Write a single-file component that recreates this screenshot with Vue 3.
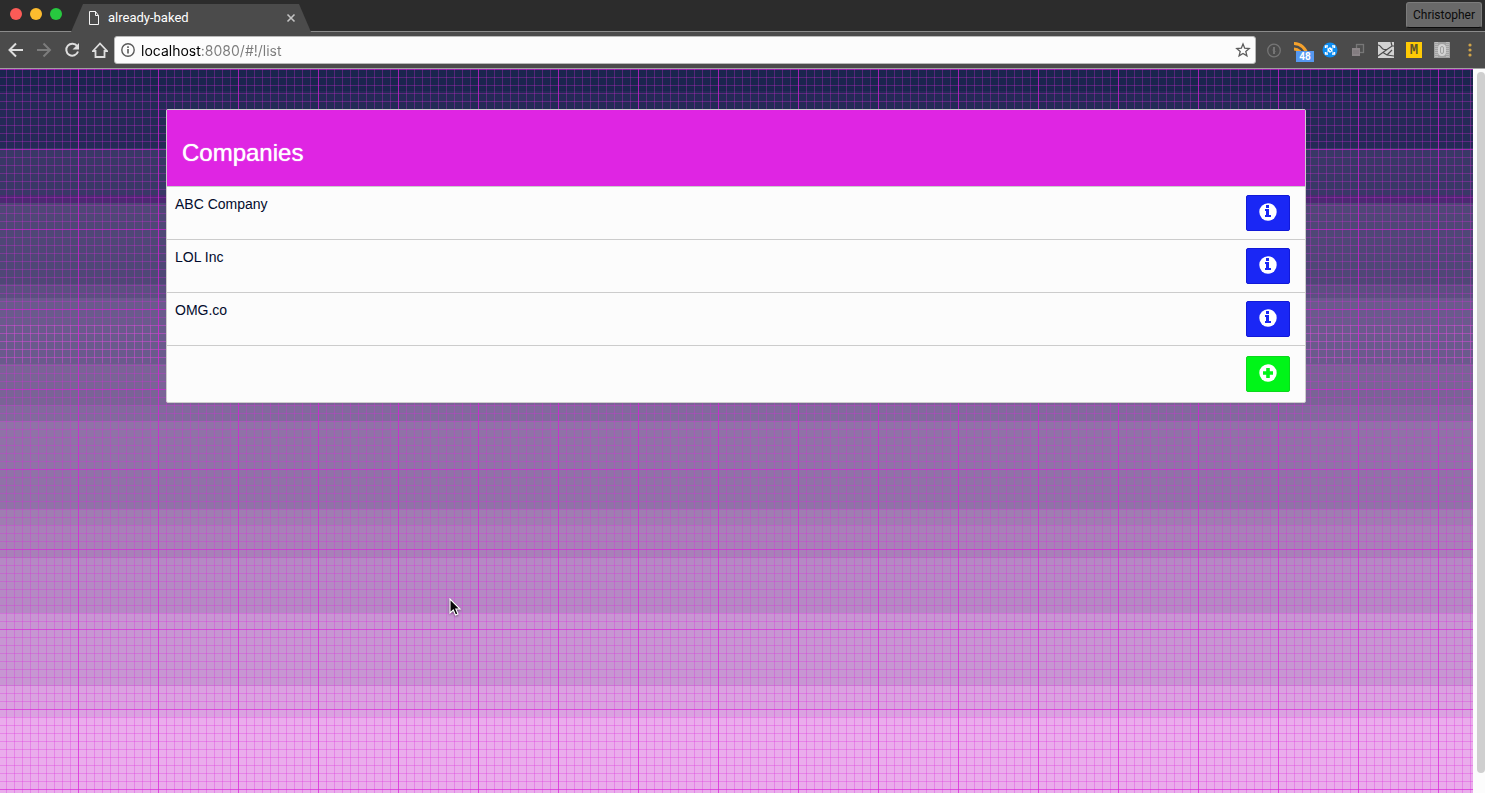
<script setup>
import { ref } from 'vue'

const url = ref('localhost:8080/#!/list')
const companies = ['ABC Company', 'LOL Inc', 'OMG.co']
</script>

<template>
  <div class="browser">
    <header class="tabbar">
      <div class="lights">
        <button class="light red" aria-label="Close window"></button>
        <button class="light amber" aria-label="Minimize window"></button>
        <button class="light green" aria-label="Zoom window"></button>
      </div>
      <div class="tab">
        <svg class="doc" width="12" height="16" viewBox="0 0 12 16" fill="none" stroke="#f4f4f4">
          <path d="M1.5 1.5h6l3 4v9h-9z M7.5 1.5v4h3" />
        </svg>
        <span class="tab-title">already-baked</span>
        <button class="plain" aria-label="Close tab">
          <svg width="10" height="10" viewBox="0 0 10 10" stroke="#c4c4c4" stroke-width="1.6">
            <path d="M1.500 1.500l7 7M8.500 1.500l-7 7" />
          </svg>
        </button>
      </div>
      <button class="profile">Christopher</button>
    </header>

    <nav class="toolbar">
      <div class="nav">
        <button class="plain tool" aria-label="Back">
          <svg width="16" height="16" viewBox="0 0 16 16" fill="none" stroke="#dedede" stroke-width="2">
            <path d="M15 8H2M8 1.5L1.5 8L8 14.5" />
          </svg>
        </button>
        <button class="plain tool" aria-label="Forward">
          <svg width="16" height="16" viewBox="0 0 16 16" fill="none" stroke="#7c7c7c" stroke-width="2">
            <path d="M1 8h12M7.500 1.500L14 8L7.500 14.500" />
          </svg>
        </button>
        <button class="plain tool" aria-label="Reload">
          <svg width="16" height="16" viewBox="0 0 16 16" fill="none" stroke="#dedede" stroke-width="2">
            <path d="M13.2 4.2A6 6 0 1 0 14 9.5" />
            <path d="M15 1v6.500H8.500z" fill="#dedede" stroke="none" />
          </svg>
        </button>
        <button class="plain tool" aria-label="Home">
          <svg width="16" height="16" viewBox="0 0 16 16" fill="none" stroke="#dedede" stroke-width="1.8">
            <path d="M1 9L8 1.500L15 9H12.500V15H3.500V9z" />
          </svg>
        </button>
      </div>
      <div class="omnibox">
        <svg width="14" height="14" viewBox="0 0 14 14" fill="none" stroke="#5a5a5a">
          <circle cx="7" cy="7" r="6.200" stroke-width="1.400" />
          <path d="M7 6v4.500M7 3.300v1.700" stroke-width="1.600" />
        </svg>
        <input v-model="url" class="url" type="text" aria-label="Address" spellcheck="false" />
        <button class="plain" aria-label="Bookmark this page">
          <svg width="16" height="16" viewBox="0 0 16 16" fill="none" stroke="#5c5c5c" stroke-width="1.300">
            <path d="M8 2l1.700 4.200 4.500.3-3.400 2.900 1.100 4.500L8 11.500l-3.900 2.400 1.100-4.500L1.800 6.500l4.500-.3z" />
          </svg>
        </button>
      </div>
      <div class="extensions">
        <button class="plain tool" aria-label="Password manager">
          <svg width="16" height="16" viewBox="0 0 16 16" fill="none" stroke="#757575">
            <circle cx="8" cy="8.500" r="6.300" stroke-width="1.300" />
            <path d="M8 5v7" stroke-width="2" />
            <path d="M6.500 8h1M8.500 9.500h1" />
          </svg>
        </button>
        <button class="plain tool feed" aria-label="Feed reader">
          <svg width="16" height="16" viewBox="0 0 16 16" fill="none" stroke="#f5a12c" stroke-width="3">
            <path d="M0 1.500A13 13 0 0 1 13 13M0 7a8 8 0 0 1 8 8" />
          </svg>
          <span class="count">48</span>
        </button>
        <button class="plain tool" aria-label="Network tools">
          <svg width="16" height="16" viewBox="0 0 16 16">
            <circle cx="8" cy="8" r="7.500" fill="#0d8df2" />
            <path d="M8 5l3 3-3 3-3-3z" fill="#fff" />
            <path d="M3.500 6V4H6M10 4h2.500v2M12.500 10v2H10M6 12H3.500v-2" fill="none" stroke="#fff" stroke-width="1.400" />
            <path d="M4.500 5l2 2M11.500 5l-2 2M11.500 11l-2-2M4.500 11l2-2" stroke="#fff" />
            <path d="M7 7.500l2 1.500" stroke="#0d8df2" />
          </svg>
        </button>
        <button class="plain tool" aria-label="Window manager">
          <svg width="16" height="16" viewBox="0 0 16 16">
            <rect x="6.500" y="2.500" width="7" height="8" fill="#505050" stroke="#777" stroke-width="1.300" />
            <rect x="2" y="6" width="8" height="8" fill="#8b8588" />
            <path d="M3.500 9h5M3.500 11h5" stroke="#6c6668" stroke-dasharray="1 1" />
          </svg>
        </button>
        <button class="plain tool" aria-label="Map tools">
          <svg width="16" height="16" viewBox="0 0 16 16" fill="none" stroke="#4b4b4b" stroke-width="1.200">
            <rect width="16" height="16" fill="#d2d2d2" stroke="none" />
            <path d="M0 3c3 0 3 4 6 4.500h3l5-3.500h2M13 0l1 4M0 14l9-6.500M5 10.500l4 2.500 7 1M9 13l5-5" />
          </svg>
        </button>
        <button class="plain tool" aria-label="M extension">
          <span class="m-badge">M</span>
        </button>
        <button class="plain tool" aria-label="Counter">
          <svg width="16" height="16" viewBox="0 0 16 16" fill="none">
            <rect width="16" height="16" fill="#a2a2a2" />
            <path d="M2.500 0v16M13.500 0v16" stroke="#bcbcbc" stroke-dasharray="1 1" stroke-width="3" />
            <rect x="4" y="2" width="8" height="12" rx="4" fill="#d3d3d3" />
            <rect x="6.500" y="4.500" width="3" height="7" rx="1.500" stroke="#a0a0a0" />
          </svg>
        </button>
        <button class="plain tool" aria-label="Menu">
          <svg width="16" height="16" viewBox="0 0 16 16" fill="#d1a449">
            <circle cx="8" cy="3" r="1.600" /><circle cx="8" cy="8" r="1.600" /><circle cx="8" cy="13" r="1.600" />
          </svg>
        </button>
      </div>
    </nav>

    <div class="viewport">
      <main class="page">
        <section class="card">
          <h1 class="heading">Companies</h1>
          <table class="companies" aria-label="Companies">
            <tbody>
              <tr v-for="name in companies" :key="name">
                <td>{{ name }}</td>
                <td class="action">
                  <button class="btn info" :aria-label="'Details of ' + name">
                    <svg width="18" height="18" viewBox="0 0 18 18">
                      <circle cx="9" cy="9" r="8.700" fill="#fff" />
                      <path d="M7 2h3v3H7zM6 6h4v6h2v2H6v-2h1V8H6z" fill="#1a27f5" />
                    </svg>
                  </button>
                </td>
              </tr>
              <tr class="last">
                <td></td>
                <td class="action">
                  <button class="btn add" aria-label="Add company">
                    <svg width="18" height="18" viewBox="0 0 18 18">
                      <circle cx="9" cy="9" r="8.700" fill="#fff" />
                      <path d="M7.200 4h3.600v3.200H14v3.600h-3.200V14H7.200v-3.200H4V7.200h3.200z" fill="#00f518" />
                    </svg>
                  </button>
                </td>
              </tr>
            </tbody>
          </table>
        </section>
      </main>
      <div class="scrollbar"><div class="thumb"></div></div>
    </div>

    <svg class="pointer" width="14" height="20" viewBox="0 0 14 20">
      <path d="M1 1v14l3.300-3 2.200 5 2.500-1-2.200-5H11z" fill="#080808" stroke="#fff" stroke-width="1.100" />
    </svg>
  </div>
</template>

<style>
body {
  margin: 0;
}
</style>

<style scoped>
* {
  box-sizing: border-box;
}
.browser {
  position: relative;
  display: flex;
  flex-direction: column;
  height: 100vh;
  overflow: hidden;
  font-family: "Liberation Sans", Arial, sans-serif;
}
button {
  font: inherit;
}
svg {
  display: block;
  flex: none;
}
.plain {
  display: flex;
  align-items: center;
  justify-content: center;
  padding: 0;
  border: 0;
  background: none;
}
.tabbar {
  display: flex;
  flex: none;
  height: 32px;
  background: #2c2c2c;
  border-bottom: 1px solid #8b8b8b;
  font-family: Roboto, sans-serif;
}
.lights {
  display: flex;
  gap: 8px;
  padding: 8px 9px 0 10px;
}
.light {
  width: 12px;
  height: 12px;
  padding: 0;
  border: 0;
  border-radius: 50%;
}
.red { background: #fc5b57; }
.amber { background: #fdbc2e; }
.green { background: #27c93f; }
.tab {
  display: flex;
  align-items: center;
  width: 240px;
  height: 28px;
  margin-top: 4px;
  padding: 0 15px 0 17px;
  background: #4b4b4b;
  clip-path: polygon(0 100%, 12px 0, 228px 0, 100% 100%);
}
.tab-title {
  flex: 1;
  margin-left: 8px;
  color: #fff;
  font-size: 13px;
  line-height: 16px;
}
.profile {
  height: 26px;
  margin: 2px 3px 0 auto;
  padding: 0 6px;
  background: #696969;
  border: 1px solid #7c7c7c;
  border-bottom-color: #0c0c0c;
  border-radius: 3px;
  color: #0b0b0b;
  font-size: 12px;
}
.toolbar {
  display: flex;
  flex: none;
  align-items: center;
  height: 37px;
  padding: 0 7px 0 8px;
  background: #4b4b4b;
  border-bottom: 1px solid #a0a0a0;
}
.nav,
.extensions {
  display: flex;
  gap: 12px;
}
.tool {
  width: 16px;
  height: 16px;
}
.omnibox {
  display: flex;
  flex: 1;
  align-items: center;
  height: 28px;
  margin: 0 10px 0 6px;
  padding: 0 4px 0 6px;
  background: #fcfcfc;
  border: 1px solid #b8b8b8;
  border-radius: 3px;
}
.url {
  flex: 1;
  min-width: 0;
  height: 24px;
  margin-left: 6px;
  padding: 0;
  border: 0;
  outline: 0;
  background: linear-gradient(90deg, #000 60px, #7b7b7b 60px);
  background-clip: text;
  -webkit-background-clip: text;
  color: transparent;
  font-family: Inter, sans-serif;
  font-size: 14px;
}
.feed {
  position: relative;
}
.count {
  position: absolute;
  left: 2px;
  top: 9px;
  width: 18px;
  background: #5698f0;
  color: #fff;
  font: bold 10px/11px Roboto, sans-serif;
  text-align: center;
}
.m-badge {
  width: 16px;
  background: #ffca05;
  color: #5d542c;
  font: bold 14px/16px "Liberation Mono", monospace;
}
.viewport {
  display: flex;
  flex: 1;
  min-height: 0;
}
.page {
  flex: 1;
  padding: 40px 16px 0 15px;
  background:
    repeating-linear-gradient(90deg, transparent 0 78px, #d81ed899 78px 79px, transparent 79px 80px),
    repeating-linear-gradient(180deg, #d81ed880 0 1px, transparent 1px 80px),
    repeating-linear-gradient(90deg, transparent 0 6px, #d060d055 6px 7px, transparent 7px 8px) 0 256px / 100% 38px no-repeat,
    repeating-linear-gradient(180deg, #d060d055 0 1px, transparent 1px 8px) 0 256px / 100% 38px no-repeat,
    repeating-linear-gradient(90deg, transparent 0 6px, #dc28dc4d 6px 7px, transparent 7px 8px),
    repeating-linear-gradient(180deg, #dc28dc4d 0 1px, transparent 1px 8px),
    linear-gradient(
      180deg,
      #1a254e 0 22px, #242a56 22px 79px,
      #393866 79px 126px, #4c2972 126px 134px,
      #4f4776 134px 215px, #5b4f80 215px 229px,
      #6a5a8c 229px 295px, #7a6396 295px 336px,
      #82699d 336px 352px, #9072a7 352px 440px,
      #9f7db1 440px 456px, #a880b8 456px 489px,
      #b589c4 489px 544px, #c796d2 544px 617px,
      #daa2e0 617px 648px, #eaacec 648px
    );
}
.card {
  max-width: 1140px;
  margin: 0 auto;
  background: #fcfcfc;
  border: 1px solid #ccc;
  border-radius: 2px;
}
.heading {
  margin: 0;
  padding: 28px 15px 18px;
  background: #df25e3;
  color: #fff;
  font-size: 24px;
  font-weight: 400;
  line-height: 30px;
  text-shadow: 0 0 1px #fff;
}
.companies {
  width: 100%;
  border-collapse: separate;
  border-spacing: 0;
  color: #020b2c;
  font-size: 14px;
  line-height: 18px;
}
.companies td {
  height: 53px;
  padding: 8px;
  border-top: 1px solid #ccc;
  vertical-align: top;
}
.companies .action {
  width: 67px;
  padding-right: 15px;
}
.companies .last td {
  height: 57px;
  padding-top: 10px;
  padding-bottom: 10px;
}
.btn {
  display: flex;
  align-items: center;
  justify-content: center;
  width: 44px;
  height: 36px;
  padding: 0 0 2px;
  border: 1px solid;
  border-radius: 2px;
}
.info {
  background: #1a27f5;
  border-color: #1219d8;
}
.add {
  background: #00f518;
  border-color: #0cd81c;
}
.scrollbar {
  flex: none;
  width: 12px;
  padding: 3px 0 20px 4px;
  background: #fcfcfc;
}
.thumb {
  height: 100%;
  background: #cfcfcf;
  border-radius: 4px;
}
.pointer {
  position: absolute;
  left: 449px;
  top: 598px;
  filter: drop-shadow(0 1px 1px #0006);
}
</style>
